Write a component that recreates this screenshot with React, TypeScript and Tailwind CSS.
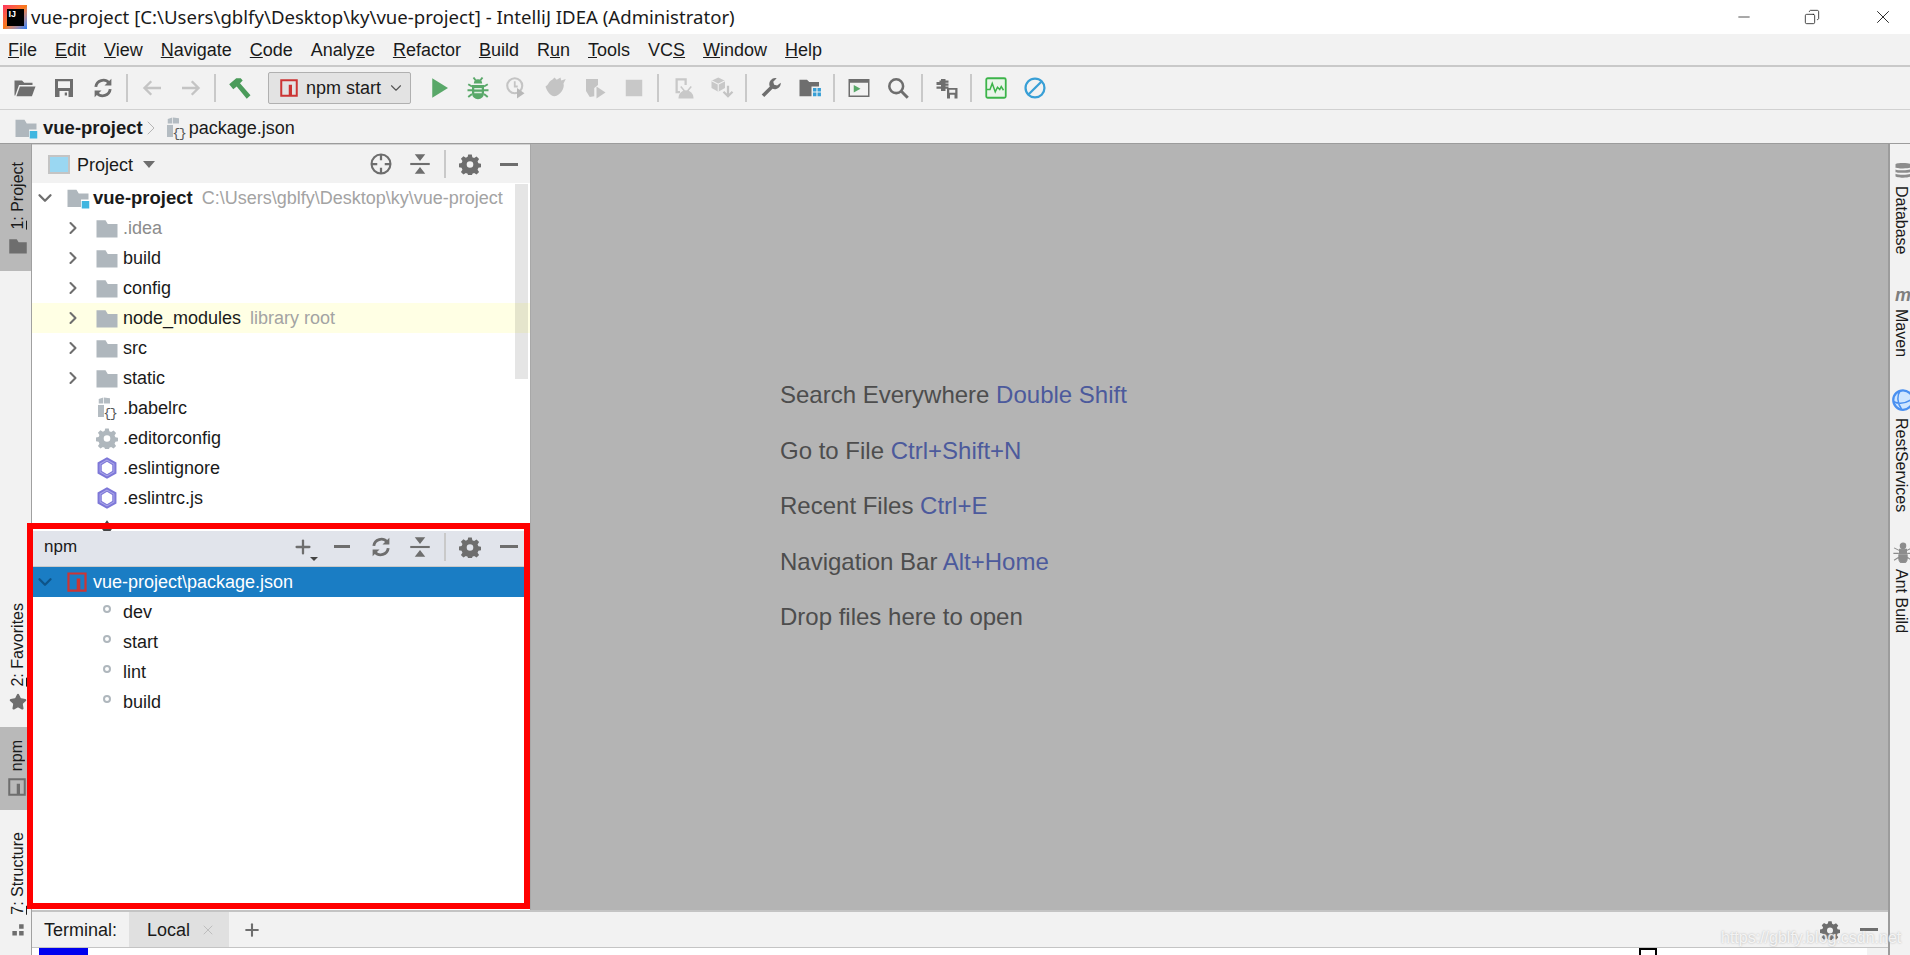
import React from 'react';
import { ChevronDown, ChevronRight, X, Plus, Minus, Star, Copy } from 'lucide-react';

// ---- small drawn icons, all on a 16 grid like the IDE's own set ----
const Svg: React.FC<{ size?: number; children: React.ReactNode; className?: string }> = ({ size = 24, children, className }) => (
  <svg width={size} height={size} viewBox="0 0 16 16" className={className}>{children}</svg>
);

const OpenIcon = () => (
  <Svg><path d="M1 3h5l1.5 1.5H13V6H4L1.5 13H1z" fill="#6e6e6e" /><path d="M4.6 7H15l-2.4 6.5H2.3z" fill="#6e6e6e" /></Svg>
);
const SaveIcon = () => (
  <Svg><path fillRule="evenodd" d="M2 2h12v12H2zM4 3.5V8h8V3.5zM5 10v4h6v-4zM8.5 11H10v2H8.5z" fill="#6e6e6e" /></Svg>
);
const SyncIcon = ({ color = '#6e6e6e' }: { color?: string }) => (
  <Svg>
    <path d="M3.2 7.2A5 5 0 0 1 12 4.6" fill="none" stroke={color} strokeWidth="1.9" />
    <path d="M13.6 1.8v4.6H9z" fill={color} />
    <path d="M12.8 8.8A5 5 0 0 1 4 11.4" fill="none" stroke={color} strokeWidth="1.9" />
    <path d="M2.4 14.2V9.6H7z" fill={color} />
  </Svg>
);
const ArrowIcon = ({ flip }: { flip?: boolean }) => (
  <Svg className={flip ? 'rotate-180' : ''}>
    <path d="M14 8H3M7.5 3.5 3 8l4.5 4.5" fill="none" stroke="#c4c4c4" strokeWidth="1.6" />
  </Svg>
);
const HammerIcon = () => (
  <Svg>
    <path d="M.8 5.5 5.5 1.500h3L9.800 3 8 4.800l7 8-2.500 2.400L5.800 7 3.500 8.800z" fill="#4a9b5a" />
  </Svg>
);
const NpmIcon = ({ size = 22, color = '#cc3534', stem = '#cc3534' }: { size?: number; color?: string; stem?: string }) => (
  <Svg size={size}>
    <path fillRule="evenodd" d="M1 1h14v14H1zM2.6 2.6v10.8h5.2V5.4h2.6v8h3V2.6z" fill={color} />
    <path d="M8.4 6h1.4v7.4H8.4z" fill={stem} opacity="0.5" />
  </Svg>
);
const RunIcon = () => <Svg><path d="M3.5 1.5v13l10.5-6.5z" fill="#59a869" /></Svg>;
const BugIcon = () => (
  <Svg>
    <path d="M4 6h8v5.500a4 4 0 0 1-8 0zM5.200 5a2.800 2.800 0 0 1 5.600 0z" fill="#59a869" />
    <path d="M1.500 5.500 4 7M14.500 5.500 12 7M1 9.500h3M15 9.500h-3M1.500 14 4 12M14.500 14 12 12M5 1l1.500 2M11 1 9.500 3" stroke="#59a869" strokeWidth="1.300" />
    <path d="M5.500 8h5v1h-5zM5.500 10.500h5v1h-5z" fill="#fff" opacity="0.8" />
  </Svg>
);
const CoverageIcon = () => (
  <Svg>
    <circle cx="6.500" cy="6.500" r="5" fill="none" stroke="#c4c4c4" strokeWidth="1.400" />
    <path d="M6.500 3.500v3.500h2" fill="none" stroke="#c4c4c4" strokeWidth="1.200" />
    <path d="M8 8v7l5-3.500z" fill="#b8b8b8" />
  </Svg>
);
const ProfilerIcon = () => (
  <Svg>
    <path d="M1 7c2-1 2.500-4 4.500-4.500L7 1l1.500 1.500L11 1l.5 2 3-1-1.500 3c1 3-2 8-6 8.500C4 13.500 2 10 1 7z" fill="#c4c4c4" />
  </Svg>
);
const ShieldRunIcon = () => (
  <Svg>
    <path d="M2 2h8v4L7.500 8v5.500L4.500 14 2 10z" fill="#c4c4c4" />
    <path d="M9 7v8l6-4z" fill="#c4c4c4" />
  </Svg>
);
const StopIcon = () => <Svg><path d="M2.500 2.500h11v11h-11z" fill="#c8c8c8" /></Svg>;
const AndroidIcon = () => (
  <Svg>
    <path d="M3 1.500h7.500V6H9V3H4.500v7H6v1.500H3z" fill="#c8c8c8" />
    <path d="M5.500 14.500c0-2.500 2-4.500 4.500-4.500s4.500 2 4.500 4.500zM6.500 7l2.500 3M13.500 7 11 10" fill="#c8c8c8" stroke="#c8c8c8" />
  </Svg>
);
const SdkIcon = () => (
  <Svg>
    <path d="M5.500 1 10 3.200V8l-4.500 2.500L1 8V3.200z" fill="#c8c8c8" />
    <path d="M5.500 5.500v5M1 3.200l4.500 2.300L10 3.200" stroke="#f2f2f2" strokeWidth="0.7" fill="none" />
    <path d="M12 6.500V13M9 10.500l3 3 3-3" fill="none" stroke="#c4c4c4" strokeWidth="1.500" />
  </Svg>
);
const WrenchIcon = () => (
  <Svg>
    <path d="M14.500 4.500a4 4 0 0 1-5.500 4L3.500 14 1.800 12.300 7.200 7A4 4 0 0 1 11.800 1.500L9.500 3.800l.6 2 2 .6z" fill="#6e6e6e" />
  </Svg>
);
const StructureIcon = () => (
  <Svg>
    <path d="M1 2.500h5L7.500 4H14v3H9v6.500H1z" fill="#6e6e6e" />
    <path d="M10 8h2.300v2.300H10zM13 8h2.300v2.300H13zM10 11h2.300v2.500H10zM13 11h2.300v2.500H13z" fill="#389fd6" />
  </Svg>
);
const TerminalIcon = () => (
  <Svg>
    <path fillRule="evenodd" d="M1 2h14v12H1zM2 4.500V13h12V4.500z" fill="#6e6e6e" />
    <path d="M4.500 6v5l4.500-2.500z" fill="#59a869" />
  </Svg>
);
const SearchIcon = () => (
  <Svg>
    <circle cx="6.800" cy="6.800" r="4.600" fill="none" stroke="#6e6e6e" strokeWidth="1.700" />
    <path d="M10.200 10.200 14.500 14.500" stroke="#6e6e6e" strokeWidth="2" />
  </Svg>
);
const DbSaveIcon = () => (
  <Svg>
    <path d="M1 4h2V3h1V2h3v1h2v1.500H7V5h2v1.500H7V7h2v1.500H7V10H4V8.500H1V7h3V6H1V4.500z" fill="#6e6e6e" />
    <path fillRule="evenodd" d="M8 8h7v7H8zM9.500 9.200v2h4v-2zM10 12.500V15h3v-2.500z" fill="#6e6e6e" />
  </Svg>
);
const MonitorIcon = () => (
  <Svg>
    <rect x="1.500" y="1.500" width="13" height="13" rx="1" fill="#eaf5ea" stroke="#3cb44a" strokeWidth="1.200" />
    <path d="M2 9h2l1.500-4 2 5.500 1.500-3 1.500 1.500 1-2L13 9.500" fill="none" stroke="#3cb44a" strokeWidth="1" />
  </Svg>
);
const BlockIcon = () => (
  <Svg>
    <circle cx="8" cy="8" r="6.300" fill="none" stroke="#389fd6" strokeWidth="1.500" />
    <path d="M3.800 12.200 12.200 3.800" stroke="#389fd6" strokeWidth="1.500" />
  </Svg>
);
const FolderIcon = () => (
  <Svg size={25}><path d="M1 2.500h6L8.500 5H15v9H1z" fill="#afb7bd" /></Svg>
);
const ModuleIcon = () => (
  <Svg size={24}>
    <path d="M1 2.500h6L8.500 5H15v4H10v5H1z" fill="#afb7bd" />
    <path d="M10.500 10H15.500v5H10.500z" fill="#40b6e0" />
  </Svg>
);
const JsonIcon = () => (
  <Svg size={24}>
    <path d="M2 6V14h4V6zM6 1v4h4V1.500z" fill="#b4bcc2" />
    <path d="M2.500 2 5.500 1v4h-3z" fill="#b4bcc2" />
    <text x="5.500" y="14" fontSize="9" fontFamily="Liberation Mono, monospace" fill="#555" letterSpacing="-1">{'{}'}</text>
  </Svg>
);
const GearIcon = ({ color = '#6e6e6e', size = 22 }: { color?: string; size?: number }) => (
  <Svg size={size}>
    <path fillRule="evenodd" d="M6.700 1h2.600l.4 2 1.300.6 1.800-1.100 1.800 1.800-1.100 1.800.6 1.300 1.900.4v2.600l-1.900.4-.6 1.300 1.100 1.700-1.800 1.900-1.800-1.100-1.300.5-.4 1.900H6.700l-.4-1.900-1.300-.5-1.800 1.100-1.800-1.900 1.100-1.700-.6-1.300-1.900-.4V7.600l1.900-.4.6-1.300-1.100-1.800 1.800-1.800 1.800 1.100 1.300-.6zM8 6a2.400 2.400 0 1 0 0 4.800A2.400 2.400 0 0 0 8 6z" fill={color} />
  </Svg>
);
const LocateIcon = () => (
  <Svg>
    <circle cx="8" cy="8" r="6.300" fill="none" stroke="#6e6e6e" strokeWidth="1.400" />
    <path d="M8 1.500v4M8 10.500v4M1.500 8h4M10.500 8h4" stroke="#6e6e6e" strokeWidth="1.500" />
  </Svg>
);
const CollapseIcon = () => (
  <Svg>
    <path d="M1.500 8h13" stroke="#6e6e6e" strokeWidth="1.400" />
    <path d="M4.500 1.500h7L8 6zM8 10l3.500 4.500h-7z" fill="#6e6e6e" />
  </Svg>
);
const HideIcon = () => <div className="w-[18px] h-[3px] bg-[#6e6e6e]" />;
const EslintIcon = () => (
  <Svg size={26}>
    <path d="M8 .8l6.300 3.600v7.200L8 15.200 1.700 11.600V4.400z" fill="#7d77d8" />
    <path d="M8 3.900 4.500 6v4L8 12.100 11.500 10V6z" fill="#fff" />
    <path d="M8 2.700 3.400 5.400v5.200L8 13.300l4.600-2.700V5.400z" fill="none" stroke="#a9a5e8" strokeWidth="0.7" />
  </Svg>
);
const ScriptDot = () => (
  <span className="w-2 h-2 rounded-full border-2 border-[#afb7bd] mt-[-6px]" />
);

const menus: [string, string, string][] = [
  ['', 'F', 'ile'], ['', 'E', 'dit'], ['', 'V', 'iew'], ['', 'N', 'avigate'], ['', 'C', 'ode'],
  ['Analy', 'z', 'e'], ['', 'R', 'efactor'], ['', 'B', 'uild'], ['R', 'u', 'n'], ['', 'T', 'ools'],
  ['VC', 'S', ''], ['', 'W', 'indow'], ['', 'H', 'elp'],
];

const Sep = () => <div className="w-[2px] h-7 bg-[#c9c9c9] mx-[4px] shrink-0" />;
const Tool: React.FC<{ children: React.ReactNode }> = ({ children }) => (
  <div className="w-[39px] h-7 flex items-center justify-center shrink-0">{children}</div>
);

const Row: React.FC<{ chevron?: boolean; icon: React.ReactNode; label?: string; note?: string; dim?: boolean; hl?: boolean }> = ({ chevron, icon, label, note, dim, hl }) => (
  <div className={`h-[30px] flex items-center shrink-0 ${hl ? 'bg-[#ffffe4]' : ''}`}>
    <div className="w-[32px] pl-[2px] flex justify-center ml-[24px]">
      {chevron && <ChevronRight size={20} strokeWidth={2.5} className="text-[#6e6e6e]" />}
    </div>
    <div className="w-[24px] flex justify-center ml-[7px]">{icon}</div>
    <span className={`ml-[4px] ${dim ? 'text-[#8c8c8c]' : 'text-[#1a1a1a]'}`}>{label}</span>
    {note && <span className="ml-[9px] text-[#a3a3a3]">{note}</span>}
  </div>
);

const PanelTools: React.FC<{ children: React.ReactNode }> = ({ children }) => (
  <div className="ml-auto flex items-center">
    {children}
    <div className="w-[2px] h-7 bg-[#c9c9c9] ml-[5px] mr-[4px]" />
    <Tool><GearIcon /></Tool>
    <div className="ml-[11px] mr-[12px]"><HideIcon /></div>
  </div>
);

const StripLeft: React.FC<{ n: string; label: string; icon: React.ReactNode; active?: boolean; className?: string }> = ({ n, label, icon, active, className }) => (
  <div className={`w-[31px] pl-[4px] flex flex-col items-center shrink-0 ${active ? 'bg-[#b9b9b9]' : ''} ${className ?? ''}`}>
    <span className="[writing-mode:vertical-rl] rotate-180 text-[16px] leading-[20px] text-[#1a1a1a] whitespace-nowrap">
      <span className="underline">{n}</span>: {label}
    </span>
    <div className="mt-[6px]">{icon}</div>
  </div>
);

const StripRight: React.FC<{ label: string; icon: React.ReactNode; className?: string }> = ({ label, icon, className }) => (
  <div className={`flex flex-col items-start w-[20px] ${className ?? ''}`}>
    <div className="w-[26px] flex justify-center">{icon}</div>
    <span className="[writing-mode:vertical-rl] ml-[3px] text-[16px] leading-[17px] text-[#1a1a1a] mt-[6px] whitespace-nowrap">{label}</span>
  </div>
);

const hints: [string, string][] = [
  ['Search Everywhere', 'Double Shift'],
  ['Go to File', 'Ctrl+Shift+N'],
  ['Recent Files', 'Ctrl+E'],
  ['Navigation Bar', 'Alt+Home'],
];

export default function App() {
  return (
    <div className="relative w-[1910px] h-[955px] overflow-hidden flex flex-col bg-[#f2f2f2] font-['Liberation_Sans',Arial,sans-serif] text-[18px] leading-[24px] text-[#1a1a1a]">
      {/* title bar */}
      <div className="h-[34px] shrink-0 bg-white flex items-center">
        <div className="ml-[3px] w-[24px] h-[24px] flex items-center justify-center bg-gradient-to-br from-[#fe315d] via-[#f97a12] to-[#087cfa]">
          <div className="w-[17px] h-[17px] bg-black text-white text-[9px] leading-[11px] font-bold pl-[2px]">IJ</div>
        </div>
        <span className="ml-[4px] font-['Noto_Sans',sans-serif] text-[18.6px] text-[#1a1a1a]">vue-project [C:\Users\gblfy\Desktop\ky\vue-project] - IntelliJ IDEA (Administrator)</span>
        <div className="ml-auto flex items-center text-[#1a1a1a]">
          <Minus size={18} strokeWidth={1} className="mr-[51px]" />
          <Copy size={16} strokeWidth={1.2} className="mr-[52px] -scale-x-100" />
          <X size={22} strokeWidth={1} className="mr-[16px]" />
        </div>
      </div>
      {/* menu */}
      <div className="h-[33px] shrink-0 flex items-center pl-[8px] gap-[18px] border-b-2 border-[#c9c9c9]">
        {menus.map(([a, u, b]) => (
          <span key={a + u + b}>{a}<span className="underline">{u}</span>{b}</span>
        ))}
      </div>
      {/* toolbar */}
      <div className="h-[43px] shrink-0 flex items-center pl-[5px] border-b border-[#d1d1d1]">
        <Tool><OpenIcon /></Tool>
        <Tool><SaveIcon /></Tool>
        <Tool><SyncIcon /></Tool>
        <Sep />
        <Tool><ArrowIcon /></Tool>
        <Tool><ArrowIcon flip /></Tool>
        <Sep />
        <Tool><HammerIcon /></Tool>
        <div className="ml-[9px] w-[143px] h-[32px] shrink-0 bg-[#e3e3e3] border border-[#b0b0b0] rounded-[2px] flex items-center pl-[10px]">
          <NpmIcon size={20} />
          <span className="ml-[7px]">npm start</span>
          <ChevronDown size={18} strokeWidth={1.5} className="ml-auto mr-[5px] text-[#555]" />
        </div>
        <div className="w-[8px] shrink-0" />
        <Tool><RunIcon /></Tool>
        <Tool><BugIcon /></Tool>
        <Tool><CoverageIcon /></Tool>
        <Tool><ProfilerIcon /></Tool>
        <Tool><ShieldRunIcon /></Tool>
        <Tool><StopIcon /></Tool>
        <Sep />
        <Tool><AndroidIcon /></Tool>
        <Tool><SdkIcon /></Tool>
        <Sep />
        <Tool><WrenchIcon /></Tool>
        <Tool><StructureIcon /></Tool>
        <Sep />
        <Tool><TerminalIcon /></Tool>
        <Tool><SearchIcon /></Tool>
        <Sep />
        <Tool><DbSaveIcon /></Tool>
        <Sep />
        <Tool><MonitorIcon /></Tool>
        <Tool><BlockIcon /></Tool>
      </div>
      {/* nav bar */}
      <div className="h-[34px] shrink-0 flex items-center pl-[14px] pt-[2px] border-b border-[#9c9c9c]">
        <ModuleIcon />
        <span className="ml-[5px] font-bold text-[18.5px]">vue-project</span>
        <ChevronRight size={24} strokeWidth={1} className="text-[#b5b5b5] mx-[-4px]" />
        <div className="ml-[5px]"><JsonIcon /></div>
        <span className="ml-[1px]">package.json</span>
      </div>
      {/* main */}
      <div className="flex-1 min-h-0 flex">
        <div className="w-[32px] shrink-0 border-r border-[#a0a0a0] flex flex-col">
          <StripLeft n="1" label="Project" active className="h-[127px] pt-[18px]" icon={<Svg size={20}><path d="M1 2.500h6L8.500 5H15v9H1z" fill="#6e6e6e" /></Svg>} />
          <StripLeft n="2" label="Favorites" className="mt-[332px] h-[118px]" icon={<Star size={18} fill="#6e6e6e" stroke="#6e6e6e" />} />
          <div className="w-[31px] h-[83px] pl-[3px] bg-[#b9b9b9] flex flex-col items-center mt-[6px] pt-[13px] shrink-0">
            <span className="[writing-mode:vertical-rl] rotate-180 text-[16px] leading-[20px]">npm</span>
            <div className="mt-[6px]"><NpmIcon size={20} color="#6e6e6e" stem="#6e6e6e" /></div>
          </div>
          <StripLeft n="7" label="Structure" className="mt-[22px] h-[120px]" icon={<div className="pt-[2px]"><Svg size={18}><path d="M9 1h4v4H9zM3 7h4v4H3zM9 7h4v4H9z" fill="#6e6e6e" /></Svg></div>} />
        </div>

        <div className="flex-1 min-w-0 flex flex-col">
          <div className="flex-1 min-h-0 flex">
            {/* side panels */}
            <div className="w-[498px] shrink-0 flex flex-col bg-white">
              <div className="h-[387px] shrink-0 flex flex-col overflow-hidden relative">
                <div className="h-[39px] shrink-0 bg-[#f2f2f2] flex items-center border-t border-[#d1d1d1]">
                  <div className="ml-[16px] w-[22px] h-[19px] border-2 border-[#c4c4c4] bg-[#9ad7f2]" />
                  <span className="ml-[7px] mt-[2px]">Project</span>
                  <div className="ml-[10px] w-0 h-0 border-x-[6px] border-x-transparent border-t-[7px] border-t-[#6e6e6e]" />
                  <PanelTools>
                    <Tool><LocateIcon /></Tool>
                    <Tool><CollapseIcon /></Tool>
                  </PanelTools>
                </div>
                <div className="h-[30px] shrink-0 flex items-center">
                  <ChevronDown size={22} strokeWidth={2.5} className="ml-[2px] text-[#6e6e6e]" />
                  <div className="ml-[10px]"><ModuleIcon /></div>
                  <span className="ml-[3px] font-bold text-[18.5px]">vue-project</span>
                  <span className="ml-[9px] text-[#a3a3a3]">C:\Users\gblfy\Desktop\ky\vue-project</span>
                </div>
                <Row chevron icon={<FolderIcon />} label=".idea" dim />
                <Row chevron icon={<FolderIcon />} label="build" />
                <Row chevron icon={<FolderIcon />} label="config" />
                <Row chevron icon={<FolderIcon />} label="node_modules" note="library root" hl />
                <Row chevron icon={<FolderIcon />} label="src" />
                <Row chevron icon={<FolderIcon />} label="static" />
                <Row icon={<JsonIcon />} label=".babelrc" />
                <Row icon={<GearIcon color="#afb7bd" />} label=".editorconfig" />
                <Row icon={<EslintIcon />} label=".eslintignore" />
                <Row icon={<EslintIcon />} label=".eslintrc.js" />
                <Row icon={<Svg size={18}><path d="M8 1l5 7-5 7-5-7z" fill="#444" /></Svg>} />
                {/* scrollbar */}
                <div className="absolute right-[2px] top-[40px] w-[13px] h-[195px] bg-black/10" />
              </div>
              <div className="flex-1 min-h-0 flex flex-col">
                <div className="h-[36px] shrink-0 bg-[#e1e4eb] flex items-center pb-[4px] border-b border-[#c9c9c9]">
                  <span className="ml-[12px] text-[17px]">npm</span>
                  <PanelTools>
                    <Tool>
                      <div className="relative">
                        <Plus size={22} strokeWidth={2.5} className="text-[#6e6e6e]" />
                        <div className="absolute right-[-4px] bottom-[-3px] w-0 h-0 border-x-[4px] border-x-transparent border-t-[4px] border-t-[#444]" />
                      </div>
                    </Tool>
                    <Tool><div className="w-[16px] h-[3px] bg-[#6e6e6e]" /></Tool>
                    <Tool><SyncIcon /></Tool>
                    <Tool><CollapseIcon /></Tool>
                  </PanelTools>
                </div>
                <div className="h-[30px] shrink-0 bg-[#1a7dc4] flex items-center text-white">
                  <ChevronDown size={22} strokeWidth={2.5} className="ml-[2px] text-[#0e5488]" />
                  <div className="ml-[10px]"><NpmIcon size={22} color="#cc3534" /></div>
                  <span className="ml-[5px]">vue-project\package.json</span>
                </div>
                {['dev', 'start', 'lint', 'build'].map((s) => (
                  <Row key={s} icon={<ScriptDot />} label={s} />
                ))}
              </div>
            </div>
            {/* empty editor */}
            <div className="flex-1 min-w-0 bg-[#b4b4b4] border-l border-[#a8a8a8] pl-[249px] pt-[235px] text-[24px] leading-[32px] text-[#4d4d4d]">
              <div className="flex flex-col gap-[23.5px]">
                {hints.map(([a, b]) => (
                  <div key={a}>{a} <span className="text-[#4c5a9c]">{b}</span></div>
                ))}
                <div>Drop files here to open</div>
              </div>
            </div>
          </div>
          {/* terminal */}
          <div className="h-[37px] shrink-0 border-t-2 border-[#c4c4c4] bg-[#f2f2f2] flex items-center">
            <span className="ml-[12px] text-[#1a1a1a]">Terminal:</span>
            <div className="ml-[12px] w-[100px] h-full bg-[#e0e0e0] flex items-center pl-[18px]">
              <span>Local</span>
              <X size={16} strokeWidth={1.2} className="ml-[10px] text-[#b5b5b5]" />
            </div>
            <Plus size={20} strokeWidth={2.5} className="ml-[13px] text-[#6e6e6e]" />
            <div className="ml-auto flex items-center mr-[10px]">
              <GearIcon size={20} />
              <div className="ml-[20px]"><HideIcon /></div>
            </div>
          </div>
          <div className="h-[8px] shrink-0 border-t border-[#c4c4c4] bg-white flex relative">
            <div className="ml-[7px] w-[49px] bg-[#0000ee]" />
            <div className="ml-[1551px] w-[18px] h-[8px] border-2 border-b-0 border-black" />
            <div className="ml-auto w-[21px] bg-[#f2f2f2]" />
          </div>
        </div>

        <div className="w-[22px] shrink-0 border-l-2 border-[#9c9c9c] bg-[#f2f2f2] overflow-hidden flex flex-col pt-[16px]">
          <StripRight label="Database" icon={<Svg size={20}><path d="M2 3.500C2 2 14 2 14 3.500V6C14 7 2 7 2 6zM2 7.500C4 8.500 12 8.500 14 7.500V9.500C14 10.500 2 10.500 2 9.500zM2 11c2 1 10 1 12 0v2c0 1.500-12 1.500-12 0z" fill="#8c8c8c" /></Svg>} />
          <StripRight label="Maven" className="mt-[32px]" icon={<span className="font-bold italic text-[18px] leading-[16px] text-[#7f7f7f]">m</span>} />
          <StripRight label="RestServices" className="mt-[31px]" icon={<Svg size={24}><circle cx="8" cy="8" r="6.500" fill="#cfe6ff" stroke="#4a90f0" strokeWidth="1.500" /><path d="M1.500 9c4 2 9 1 13-2M6 2c-2 3-2 8 1 12" fill="none" stroke="#4a90f0" /></Svg>} />
          <StripRight label="Ant Build" className="mt-[29px]" icon={<Svg size={22}><path d="M8 1.500a2 2 0 0 1 2 2 2 2 0 0 1-4 0 2 2 0 0 1 2-2zM5.500 6h5v3h-5zM5 10h6v3a3 3 0 0 1-6 0zM1.500 5l4 2M14.500 5l-4 2M1 9h4M15 9h-4M1.500 14l4-2.500M14.500 14l-4-2.500" fill="#8c8c8c" stroke="#8c8c8c" strokeWidth="0.8" /></Svg>} />
        </div>
      </div>

      {/* red annotation box drawn over the screenshot */}
      <div className="absolute left-[27px] top-[523px] w-[503px] h-[386px] border-[6px] border-[#ff0000] pointer-events-none" />
      {/* watermark */}
      <div className="absolute left-[1721px] top-[928px] text-[16px] leading-[20px] whitespace-nowrap text-white/80 [text-shadow:0_0_2px_#aaa] pointer-events-none">https://gblfy.blog.csdn.net</div>
    </div>
  );
}
